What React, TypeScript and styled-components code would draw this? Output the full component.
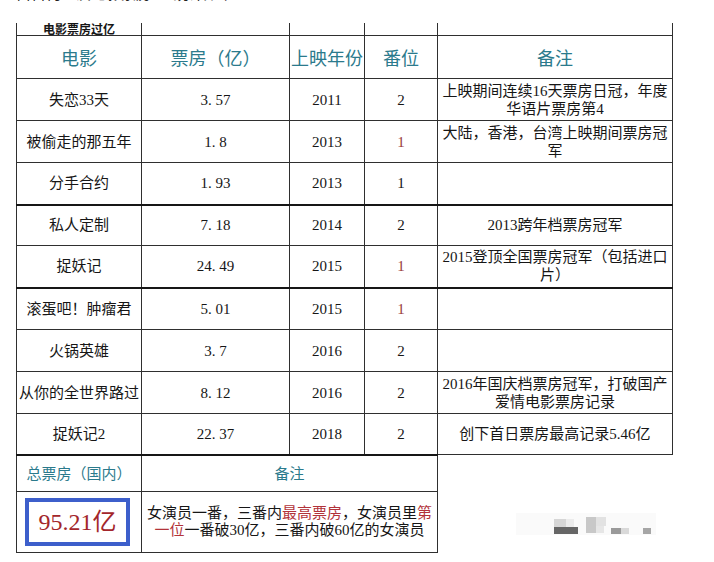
import React from "react"
import styled, { createGlobalStyle } from "styled-components"

interface FilmRow {
  name: string
  gross: string
  year: string
  rank: string
  firstLead?: boolean
  heavy?: boolean
  height: number
  note: string[]
}

const films: FilmRow[] = [
  { name: "失恋33天", gross: "3.57", year: "2011", rank: "2", height: 42, note: ["上映期间连续16天票房日冠，年度", "华语片票房第4"] },
  { name: "被偷走的那五年", gross: "1.8", year: "2013", rank: "1", firstLead: true, height: 42, note: ["大陆，香港，台湾上映期间票房冠", "军"] },
  { name: "分手合约", gross: "1.93", year: "2013", rank: "1", height: 42, note: [] },
  { name: "私人定制", gross: "7.18", year: "2014", rank: "2", heavy: true, height: 41, note: ["2013跨年档票房冠军"] },
  { name: "捉妖记", gross: "24.49", year: "2015", rank: "1", firstLead: true, height: 42, note: ["2015登顶全国票房冠军（包括进口", "片）"] },
  { name: "滚蛋吧！肿瘤君", gross: "5.01", year: "2015", rank: "1", firstLead: true, heavy: true, height: 42, note: [] },
  { name: "火锅英雄", gross: "3.7", year: "2016", rank: "2", height: 42, note: [] },
  { name: "从你的全世界路过", gross: "8.12", year: "2016", rank: "2", height: 42, note: ["2016年国庆档票房冠军，打破国产", "爱情电影票房记录"] },
  { name: "捉妖记2", gross: "22.37", year: "2018", rank: "2", height: 41, note: ["创下首日票房最高记录5.46亿"] },
]

const GlobalStyle = createGlobalStyle`
  html, body {
    margin: 0;
    padding: 0;
    background: #fff;
  }
  body {
    font-family: "Liberation Serif", "Noto Sans CJK SC", serif;
    color: #161616;
  }
`

const Page = styled.div`
  width: 714px;
  height: 562px;
  overflow: hidden;
  padding-left: 16px;
  box-sizing: border-box;
`

// only the bottom edge of the previous paragraph is left in the crop
const CutLine = styled.div`
  height: 4px;
  overflow: hidden;
  margin-bottom: 19px;

  span {
    display: block;
    margin-top: -14px;
    font-size: 15px;
    line-height: 17px;
    white-space: pre;
    color: #222;
  }
`

const Sheet = styled.table`
  border-collapse: collapse;
  table-layout: fixed;
  width: 656px;

  td {
    border: 1px solid #2f2f2f;
    padding: 0 3px;
    text-align: center;
    vertical-align: middle;
    font-size: 15px;
    line-height: 18px;
    overflow: hidden;
    white-space: nowrap;
  }
`

const Row = styled.tr<{ $h: number; $heavy?: boolean }>`
  height: ${(p) => p.$h}px;

  td {
    border-top-width: ${(p) => (p.$heavy ? 2 : 1)}px;
    border-top-color: ${(p) => (p.$heavy ? "#161616" : "#2f2f2f")};
  }
`

const TitleRow = styled.tr`
  height: 12px;

  td {
    border-top: none;
    line-height: 12px;
  }
`

const TitleCell = styled.td`
  && {
    font-size: 12px;
    font-weight: bold;
    font-family: "Noto Sans CJK SC", sans-serif;
    padding: 0;
    overflow: visible;
    vertical-align: bottom;
  }
`

const HeadCell = styled.td<{ $small?: boolean }>`
  && {
    font-family: "Noto Sans CJK SC", sans-serif;
    color: #2b7a8c;
    font-size: ${(p) => (p.$small ? 15 : 18)}px;
    padding: 0;
  }
`

const Cell = styled.td<{ $tone?: "red" }>`
  && {
    color: ${(p) => (p.$tone === "red" ? "#9a3a3a" : "#161616")};
    padding: 0 1px;
  }
`

const NoteCell = styled.td`
  && {
    padding: 0 2px;
    line-height: 18px;
  }

  span {
    display: block;
  }
`

const Dot = styled.span`
  display: inline-block;
  width: 7.5px;
  text-align: left;
`

const TotalCell = styled.td`
  && {
    padding: 0;
  }
`

const TotalBox = styled.div`
  width: 105px;
  height: 48px;
  box-sizing: border-box;
  margin: 0 auto 0 8px;
  border: 4px solid #3d5fcb;
  display: flex;
  align-items: center;
  justify-content: center;
  color: #a3262b;
  font-size: 24px;
  line-height: 1;
`

const SummaryCell = styled.td`
  && {
    line-height: 17px;
    padding: 0 2px;
  }

  span.line {
    display: block;
  }

  em {
    font-style: normal;
    color: #b2333a;
  }
`

const BlankCell = styled.td`
  && {
    border: none;
    vertical-align: bottom;
    text-align: left;
    padding: 0 0 14px 78px;
  }

  svg {
    display: block;
  }
`

const Amount = ({ value }: { value: string }) => {
  const [whole, part] = value.split(".")
  return (
    <>
      {whole}
      <Dot>.</Dot>
      {part}
    </>
  )
}

const Watermark = () => (
  <svg width="140" height="30" viewBox="0 0 140 30">
    <rect x="0" y="4" width="140" height="22" fill="#fafafa" />
    <rect x="38" y="10" width="12" height="8" fill="#d6d6d6" />
    <rect x="50" y="10" width="8" height="8" fill="#ececec" />
    <rect x="38" y="18" width="24" height="7" fill="#666" />
    <rect x="70" y="8" width="10" height="16" fill="#c8c8c8" />
    <rect x="80" y="8" width="10" height="9" fill="#e2e2e2" />
    <rect x="80" y="17" width="8" height="7" fill="#e6e6e6" />
    <rect x="95" y="19" width="10" height="6" fill="#9a9a9a" />
    <rect x="105" y="19" width="8" height="6" fill="#d9d9d9" />
    <rect x="127" y="19" width="8" height="6" fill="#a6a6a6" />
  </svg>
)

export default function App() {
  return (
    <Page>
      <GlobalStyle />
      <CutLine>
        <span>白百何主演电影票房      统计如下：</span>
      </CutLine>
      <Sheet>
        <colgroup>
          <col style={{ width: 125 }} />
          <col style={{ width: 148 }} />
          <col style={{ width: 75 }} />
          <col style={{ width: 73 }} />
          <col style={{ width: 235 }} />
        </colgroup>
        <tbody>
          <TitleRow>
            <TitleCell>电影票房过亿</TitleCell>
            <td />
            <td />
            <td />
            <td />
          </TitleRow>
          <Row $h={43}>
            <HeadCell>电影</HeadCell>
            <HeadCell>票房（亿）</HeadCell>
            <HeadCell>上映年份</HeadCell>
            <HeadCell>番位</HeadCell>
            <HeadCell>备注</HeadCell>
          </Row>
          {films.map((f) => (
            <Row key={f.name} $h={f.height} $heavy={f.heavy}>
              <Cell>{f.name}</Cell>
              <Cell>
                <Amount value={f.gross} />
              </Cell>
              <Cell>{f.year}</Cell>
              <Cell $tone={f.firstLead ? "red" : undefined}>{f.rank}</Cell>
              <NoteCell>
                {f.note.map((line) => (
                  <span key={line}>{line}</span>
                ))}
              </NoteCell>
            </Row>
          ))}
          <Row $h={37} $heavy>
            <HeadCell $small>总票房（国内）</HeadCell>
            <HeadCell $small colSpan={3}>
              备注
            </HeadCell>
            <BlankCell rowSpan={2}>
              <Watermark />
            </BlankCell>
          </Row>
          <Row $h={61}>
            <TotalCell>
              <TotalBox>
                95.21亿
              </TotalBox>
            </TotalCell>
            <SummaryCell colSpan={3}>
              <span className="line">
                女演员一番，三番内<em>最高票房</em>，女演员里<em>第</em>
              </span>
              <span className="line">
                <em>一位</em>一番破30亿，三番内破60亿的女演员
              </span>
            </SummaryCell>
          </Row>
        </tbody>
      </Sheet>
    </Page>
  )
}
